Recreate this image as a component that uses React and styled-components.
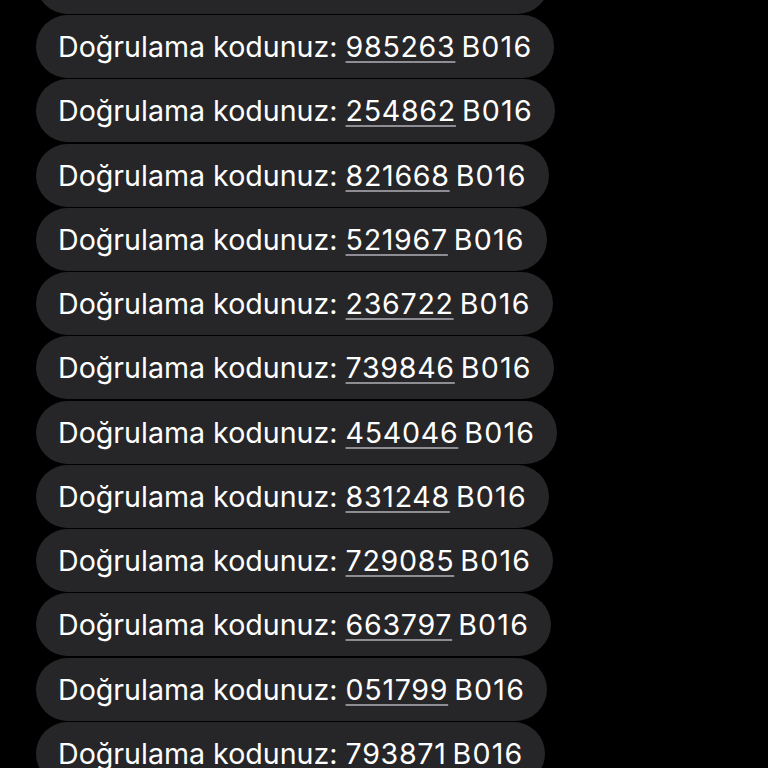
import React from 'react'
import styled, { createGlobalStyle } from 'styled-components'

const codes = [
  '418530', '985263', '254862', '821668', '521967', '236722', '739846',
  '454046', '831248', '729085', '663797', '051799', '793871',
]

const Global = createGlobalStyle`
  html, body {
    margin: 0;
    padding: 0;
    background: #000;
  }
  body {
    font-family: Inter, "Noto Sans", sans-serif;
  }
`

const Screen = styled.div`
  width: 768px;
  height: 768px;
  overflow: hidden;
  background: #000;
`

const Thread = styled.div`
  display: flex;
  flex-direction: column;
  align-items: flex-start;
  gap: 1.27px;
  margin-top: -49.3px;
  padding-left: 36px;
`

const Bubble = styled.div`
  height: 63px;
  box-sizing: border-box;
  display: flex;
  align-items: center;
  padding: 0 22px 0 22px;
  border-radius: 31.5px;
  background: #262628;
  color: #fff;
  font-size: 28.6px;
  white-space: nowrap;
`

const Label = styled.span`
  letter-spacing: 0;
`

const Code = styled.span`
  letter-spacing: 0.7px;
  margin-left: 8px;
  text-decoration: underline;
  text-decoration-color: #8d8d93;
  text-decoration-thickness: 2px;
  text-underline-offset: 4px;
`

const Suffix = styled.span`
  letter-spacing: 1.2px;
  margin-left: 6px;
`

export default function App() {
  return (
    <Screen>
      <Global />
      <Thread>
        {codes.map((code, i) => (
          <Bubble key={i}>
            <Label>Doğrulama kodunuz:</Label>
            <Code>{code}</Code>
            <Suffix>B016</Suffix>
          </Bubble>
        ))}
      </Thread>
    </Screen>
  )
}
